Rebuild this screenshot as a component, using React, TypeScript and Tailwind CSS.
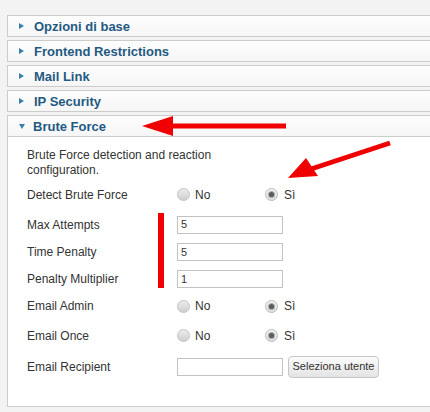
import React from "react";

const font = { fontFamily: '"Liberation Sans", Arial, sans-serif' };

function Header({ title, open }: { title: string; open?: boolean }) {
  return (
    <div className="h-[20px] bg-linear-to-b from-[#fdfdfd] to-[#f6f6f6] flex items-center pl-[11px]">
      {open ? (
        <span className="w-0 h-0 border-l-[3.5px] border-r-[3.5px] border-t-[5px] border-l-transparent border-r-transparent border-t-[#3a7eae] mr-[8px] mt-[1px]" />
      ) : (
        <span className="w-0 h-0 border-t-[3.5px] border-b-[3.5px] border-l-[5px] border-t-transparent border-b-transparent border-l-[#3a7eae] mr-[10px]" />
      )}
      <span className="text-[13px] font-bold text-[#1f5a82] leading-none">{title}</span>
    </div>
  );
}

function Radio({ checked }: { checked?: boolean }) {
  return checked ? (
    <span className="w-[13px] h-[13px] rounded-full border border-[#b9b9b9] bg-linear-to-b from-[#f7f7f7] to-[#e2e2e2] flex items-center justify-center shrink-0">
      <span className="w-[5px] h-[5px] rounded-full bg-[#5c5c5c] shadow-[0_0_1px_1px_rgba(90,90,90,0.5)]" />
    </span>
  ) : (
    <span className="w-[13px] h-[13px] rounded-full border border-[#c3c3c3] bg-linear-to-b from-[#ececec] to-[#cfcfcf] shrink-0" />
  );
}

function YesNo() {
  return (
    <div className="flex items-center">
      <div className="w-[88px] flex items-center gap-[5px]">
        <Radio />
        <span>No</span>
      </div>
      <div className="flex items-center gap-[6px]">
        <Radio checked />
        <span>Sì</span>
      </div>
    </div>
  );
}

function TextInput({ value }: { value?: string }) {
  return (
    <div className="w-[106px] h-[18px] border border-[#c2c2c2] bg-white text-[11px] text-[#333] pl-[3px] flex items-center">
      {value}
    </div>
  );
}

function Row({ label, h, children }: { label: string; h: string; children: React.ReactNode }) {
  return (
    <div className={`flex items-center ${h}`}>
      <div className="w-[150px] shrink-0">{label}</div>
      {children}
    </div>
  );
}

export default function App() {
  return (
    <div className="relative w-[430px] h-[412px] overflow-hidden bg-[#f3f3f3]" style={font}>
      <div className="pt-[15px] pl-[7px] flex flex-col gap-[3px] w-[450px]">
        {["Opzioni di base", "Frontend Restrictions", "Mail Link", "IP Security"].map((t) => (
          <div key={t} className="border border-[#cccccc]">
            <Header title={t} />
          </div>
        ))}
        <div className="border border-[#cccccc]">
          <Header title="Brute Force" open />
          <div className="border-t border-[#cccccc] bg-white h-[270px] pl-[19px] pt-[11px] text-[12px] text-[#333]">
            <p className="w-[200px] leading-[15px]">Brute Force detection and reaction configuration.</p>
            <div className="mt-[2px]">
              <Row label="Detect Brute Force" h="h-[29px]">
                <YesNo />
              </Row>
              <Row label="Max Attempts" h="h-[31px]">
                <TextInput value="5" />
              </Row>
              <Row label="Time Penalty" h="h-[24px]">
                <TextInput value="5" />
              </Row>
              <Row label="Penalty Multiplier" h="h-[30px]">
                <TextInput value="1" />
              </Row>
              <Row label="Email Admin" h="h-[24px]">
                <YesNo />
              </Row>
              <Row label="Email Once" h="h-[35px]">
                <YesNo />
              </Row>
              <Row label="Email Recipient" h="h-[27px]">
                <TextInput />
                <button className="ml-[5px] w-[91px] h-[22px] px-0 whitespace-nowrap rounded-[4px] border border-[#c6c6c6] bg-linear-to-b from-[#fbfbfb] to-[#e4e4e4] text-[11px] text-[#333]">
                  Seleziona utente
                </button>
              </Row>
            </div>
          </div>
        </div>
      </div>
      <svg className="absolute inset-0 pointer-events-none" width="430" height="412" viewBox="0 0 430 412">
        <rect x="168" y="123.5" width="118" height="5" fill="#f00000" />
        <polygon points="142,126 173,116 173,136" fill="#f00000" />
        <line x1="390" y1="143" x2="308" y2="170" stroke="#f00000" strokeWidth="5" />
        <polygon points="288,178 306,158 318,176" fill="#f00000" />
        <rect x="158" y="213" width="6" height="75" fill="#f00000" />
      </svg>
    </div>
  );
}
